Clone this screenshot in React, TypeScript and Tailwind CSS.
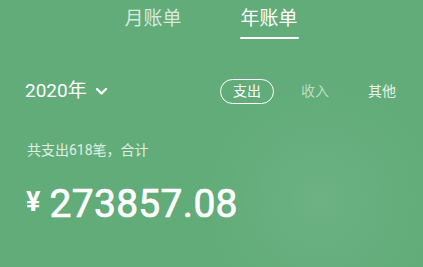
const App = () => {
  return (
    <div className="w-[423px] h-[267px] overflow-hidden bg-[#61ac79] bg-[radial-gradient(circle_at_320px_200px,rgba(255,255,255,0.07),transparent_120px)] text-white font-['Roboto','Noto_Sans_CJK_SC',sans-serif]">
      {/* tabs */}
      <div className="flex justify-center gap-[58px] pt-[6px]">
        <div className="flex flex-col items-center">
          <span className="text-[19px] leading-[26px] text-white/75">月账单</span>
        </div>
        <div className="flex flex-col items-center">
          <span className="text-[19px] leading-[26px]">年账单</span>
          <div className="mt-[5px] h-[2px] w-[59px] rounded-full bg-white" />
        </div>
      </div>

      {/* year + type switch */}
      <div className="mt-[39px] flex items-center justify-between pl-[25px] pr-[27px]">
        <div className="flex items-center">
          <span className="text-[19px] leading-[26px]">2020年</span>
          <svg className="ml-[8px]" width="13" height="9" viewBox="0 0 13 9">
            <path d="M2 2l4.5 4.5L11 2" fill="none" stroke="white" strokeWidth="2.4" strokeLinecap="round" strokeLinejoin="round" />
          </svg>
        </div>
        <div className="flex items-center text-[14px]">
          <span className="flex h-[25px] w-[54px] items-center justify-center rounded-full border-[1.5px] border-white">
            支出
          </span>
          <span className="ml-[27px] text-white/60">收入</span>
          <span className="ml-[39px] text-white/85">其他</span>
        </div>
      </div>

      {/* summary */}
      <div className="mt-[36px] pl-[27px] text-[14px] leading-[20px] text-white/80">共支出618笔，合计</div>
      <div className="mt-[22px] flex items-center pl-[26px]">
        <span className="mb-[4px] text-[27px] font-bold leading-none">¥</span>
        <span className="ml-[9px] text-[39px] font-normal leading-[44px] tracking-[0.3px] [-webkit-text-stroke:0.7px_white]">
          273857.08
        </span>
      </div>
    </div>
  );
};

export default App;
